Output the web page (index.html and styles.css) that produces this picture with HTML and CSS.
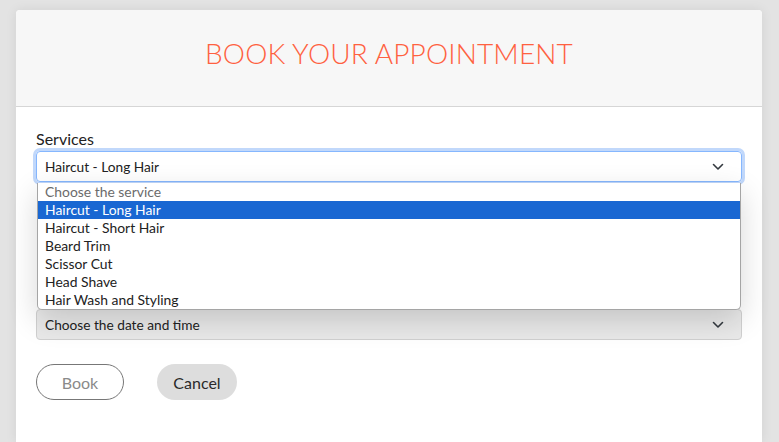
FILE: index.html
```html
<!DOCTYPE html>
<html>
<head>
<meta charset="utf-8">
<link rel="stylesheet" href="styles.css">
</head>
<body>
<div class="card">
  <div class="card-header">
    <h1 class="title">BOOK YOUR APPOINTMENT</h1>
  </div>
  <div class="card-body">
    <div class="field">
      <label class="label">Services</label>
      <div class="select focused">
        <span class="select-text">Haircut - Long Hair</span>
        <svg class="chev" width="12" height="8" viewBox="0 0 12 8"><path d="M1.5 1.5 L6 6 L10.5 1.5" fill="none" stroke="#343a40" stroke-width="1.6" stroke-linecap="round" stroke-linejoin="round"/></svg>
      </div>
      <ul class="dropdown">
        <li class="opt placeholder">Choose the service</li>
        <li class="opt selected">Haircut - Long Hair</li>
        <li class="opt">Haircut - Short Hair</li>
        <li class="opt">Beard Trim</li>
        <li class="opt">Scissor Cut</li>
        <li class="opt">Head Shave</li>
        <li class="opt">Hair Wash and Styling</li>
      </ul>
    </div>
    <div class="field field-date">
      <div class="select disabled" aria-label="Date and time">
        <span class="select-text">Choose the date and time</span>
        <svg class="chev" width="12" height="8" viewBox="0 0 12 8"><path d="M1.5 1.5 L6 6 L10.5 1.5" fill="none" stroke="#343a40" stroke-width="1.6" stroke-linecap="round" stroke-linejoin="round"/></svg>
      </div>
    </div>
    <div class="actions">
      <button class="btn btn-book">Book</button>
      <button class="btn btn-cancel">Cancel</button>
    </div>
  </div>
</div>
</body>
</html>
```
FILE: styles.css
```css
html, body {
  margin: 0;
  padding: 0;
  height: 100%;
  overflow: hidden;
}
body {
  background: #e3e3e3;
  font-family: "Lato", "Liberation Sans", sans-serif;
  padding: 10px 17px 0 16px;
  box-sizing: border-box;
}
.card {
  background: #fff;
  border-radius: 4px 4px 0 0;
  box-shadow: 0 0 12px rgba(0,0,0,0.08);
  height: 432px;
}
.card-header {
  background: #f7f7f7;
  height: 97px;
  border-bottom: 1px solid #d6d6d6;
  border-radius: 4px 4px 0 0;
  display: flex;
  justify-content: center;
  padding-top: 27px;
  box-sizing: border-box;
}
.title {
  margin: 0;
  font-weight: 300;
  font-size: 28px;
  line-height: 32px;
  color: #ff6140;
  letter-spacing: 0.15px;
}
.card-body {
  padding: 23px 20px 0 20px;
}
.field {
  position: relative;
}
.label {
  display: block;
  font-size: 16px;
  line-height: 18px;
  color: #222;
  margin-bottom: 3px;
}
.select {
  height: 31px;
  border: 1px solid #ccc;
  border-radius: 4px;
  box-sizing: border-box;
  display: flex;
  align-items: center;
  justify-content: space-between;
  padding: 0 17px 0 8px;
  font-size: 13.7px;
  color: #222;
}
.select.focused {
  border-color: #86b7fe;
  box-shadow: 0 0 0 3px #c1d8fb;
}
.select.disabled {
  background: #e9e9e9;
  border-color: #d0d0d0;
}
.dropdown {
  position: absolute;
  left: 1px;
  right: 1px;
  top: 53px;
  margin: 0;
  padding: 0;
  list-style: none;
  background: #fff;
  border: 1px solid #a5a5a5;
  border-top: none;
  border-radius: 0 0 5px 5px;
  box-shadow: 0 10px 30px rgba(0,0,0,0.16);
  z-index: 2;
  overflow: hidden;
}
.opt {
  height: 18px;
  line-height: 18px;
  font-size: 13.9px;
  padding-left: 7px;
  color: #222;
}
.opt.placeholder {
  color: #6b6b6b;
}
.opt.selected {
  background: #1967d2;
  color: #fff;
}
.field-date {
  margin-top: 127px;
}
.actions {
  display: flex;
  gap: 33px;
  margin-top: 24px;
}
.btn {
  font-family: "Lato", "Liberation Sans", sans-serif;
  font-size: 16px;
  height: 36px;
  border-radius: 18px;
  cursor: pointer;
  padding: 0;
}
.btn-book {
  width: 88px;
  background: #fff;
  border: 1px solid #777;
  color: #8a8a8a;
}
.btn-cancel {
  width: 80px;
  background: #dddddd;
  border: none;
  color: #2a2a2a;
}
```
